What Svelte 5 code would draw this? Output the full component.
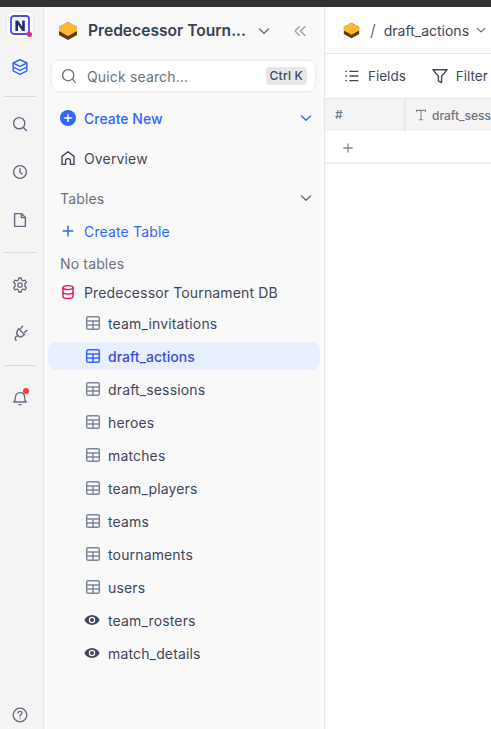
<script lang="ts">
    const tables = ['team_invitations', 'draft_actions', 'draft_sessions', 'heroes', 'matches', 'team_players', 'teams', 'tournaments', 'users'];
    const views = ['team_rosters', 'match_details'];
    const active = 'draft_actions';
</script>

{#snippet cube(size)}
    <svg width={size} height={size} viewBox="0 0 20 20">
        <path d="M10 1 L19 6 V14 L10 19 L1 14 V6 Z" fill="#5c3f08" />
        <path d="M10 1 L19 6 V10 L10 15 L1 10 V6 Z" fill="#fdb930" />
    </svg>
{/snippet}

<div class="topbar"></div>
<div class="page">
    <nav class="rail">
        <div class="logo">
            <svg width="20" height="20" viewBox="0 0 20 20" fill="none">
                <rect x="1" y="1" width="18" height="18" rx="3" stroke="#4a4ae0" stroke-width="1.8" />
                <path d="M5.4 16 V5.6 H8 L12.2 11.6 V5.6 H14.8 V16 H12.4 L8 9.8 V16 Z" fill="#1f2d78" />
            </svg>
            <span class="logo-dot"></span>
        </div>
        <div class="rail-icon first">
            <svg width="18" height="18" viewBox="0 0 18 18" fill="none" stroke="#3366ff" stroke-width="1.5" stroke-linejoin="round">
                <path d="M9 1.7 L16 5 L9 8.4 L2 5 Z" />
                <path d="M2.2 5.4 V12.8 L9 16.3 L15.8 12.8 V5.4" />
                <path d="M2.2 9.1 L9 12.4 L15.8 9.1" />
            </svg>
        </div>
        <div class="rail-sep top"></div>
        <div class="rail-icon">
            <svg width="16" height="16" viewBox="0 0 16 16" fill="none" stroke="#656b80" stroke-width="1.4" stroke-linecap="round">
                <circle cx="7.2" cy="7.2" r="5.6" /><path d="M11.4 11.4 L14.4 14.4" />
            </svg>
        </div>
        <div class="rail-icon">
            <svg width="16" height="16" viewBox="0 0 16 16" fill="none" stroke="#656b80" stroke-width="1.4" stroke-linecap="round">
                <circle cx="8" cy="8" r="6.4" /><path d="M8 4.6 V8.2 L10 10" />
            </svg>
        </div>
        <div class="rail-icon">
            <svg width="16" height="16" viewBox="0 0 16 16" fill="none" stroke="#656b80" stroke-width="1.4" stroke-linejoin="round">
                <path d="M2.6 1.6 H9.4 L13.4 5.6 V14.4 H2.6 Z" /><path d="M9.4 1.6 V5.6 H13.4" />
            </svg>
        </div>
        <div class="rail-sep"></div>
        <div class="rail-icon">
            <svg width="16" height="16" viewBox="0 0 16 16" fill="none" stroke="#656b80" stroke-width="1.3" stroke-linejoin="round">
                <circle cx="8" cy="8" r="2.2" />
                <path d="M6.8 1 H9.2 L9.6 3 L11.3 3.9 L13.2 3.2 L14.4 5.3 L12.9 6.6 V9.4 L14.4 10.7 L13.2 12.8 L11.3 12.1 L9.6 13 L9.2 15 H6.8 L6.4 13 L4.7 12.1 L2.8 12.8 L1.6 10.7 L3.1 9.4 V6.6 L1.6 5.3 L2.8 3.2 L4.7 3.9 L6.4 3 Z" />
            </svg>
        </div>
        <div class="rail-icon">
            <svg width="16" height="16" viewBox="0 0 16 16" fill="none" stroke="#656b80" stroke-width="1.4" stroke-linecap="round" stroke-linejoin="round">
                <path d="M6.6 3.6 L12.4 9.4 L10.6 11 C9.2 12.2 7.2 12 6 10.6 C4.6 9.4 4.4 7.4 5.4 6 Z" />
                <path d="M8.8 3.4 L10.6 1.2 M12.6 7.2 L14.8 5.4 M5.8 10.8 C3.4 11.4 2.4 13.2 4 15.2" />
            </svg>
        </div>
        <div class="rail-sep"></div>
        <div class="rail-icon bell">
            <svg width="16" height="16" viewBox="0 0 16 16" fill="none" stroke="#656b80" stroke-width="1.3" stroke-linecap="round" stroke-linejoin="round">
                <path d="M1.6 12 C3 11 3.4 9.6 3.4 7.4 C3.4 4.6 5.2 2.6 8 2.6 C10.8 2.6 12.6 4.6 12.6 7.4 C12.6 9.6 13 11 14.4 12 Z" />
                <path d="M6.8 14.6 H9.2" />
            </svg>
            <span class="bell-dot"></span>
        </div>
        <div class="rail-bottom">
            <svg width="16" height="16" viewBox="0 0 16 16" fill="none" stroke="#656b80" stroke-width="1.3" stroke-linecap="round">
                <circle cx="8" cy="8" r="6.8" />
                <path d="M6 6.2 C6 4.9 7 4.3 8 4.3 C9.1 4.3 10 5 10 6.1 C10 7.6 8 7.6 8 9.2" />
                <path d="M8 11.4 V11.5" />
            </svg>
        </div>
    </nav>

    <aside class="sidebar">
        <div class="project">
            {@render cube(20)}
            <span class="project-name">Predecessor Tourn...</span>
            <svg class="project-caret" width="12" height="12" viewBox="0 0 12 12" fill="none" stroke="#656b80" stroke-width="1.4" stroke-linecap="round" stroke-linejoin="round"><path d="M1.5 4 L6 8.2 L10.5 4" /></svg>
            <svg class="collapse" width="14" height="14" viewBox="0 0 14 14" fill="none" stroke="#9aa0b0" stroke-width="1.3" stroke-linecap="round" stroke-linejoin="round"><path d="M6.5 2.5 L2 7 L6.5 11.5 M12 2.5 L7.5 7 L12 11.5" /></svg>
        </div>

        <div class="search">
            <svg width="16" height="16" viewBox="0 0 16 16" fill="none" stroke="#656b80" stroke-width="1.3" stroke-linecap="round">
                <circle cx="7.2" cy="7.2" r="5.6" /><path d="M11.4 11.4 L14.4 14.4" />
            </svg>
            <span class="search-text">Quick search...</span>
            <span class="kbd">Ctrl K</span>
        </div>

        <div class="row create-new">
            <svg width="16" height="16" viewBox="0 0 16 16"><circle cx="8" cy="8" r="8" fill="#3366ff" /><path d="M8 4.2 V11.8 M4.2 8 H11.8" stroke="#fff" stroke-width="1.5" /></svg>
            <span>Create New</span>
            <svg class="end" width="12" height="12" viewBox="0 0 12 12" fill="none" stroke="#3366ff" stroke-width="1.4" stroke-linecap="round" stroke-linejoin="round"><path d="M1.5 4 L6 8.2 L10.5 4" /></svg>
        </div>

        <div class="row overview">
            <svg width="16" height="16" viewBox="0 0 16 16" fill="none" stroke="#414759" stroke-width="1.4" stroke-linejoin="round"><path d="M2 14.4 V6.4 L8 1.8 L14 6.4 V14.4 H10.4 V10.4 C10.4 8 5.6 8 5.6 10.4 V14.4 Z" /></svg>
            <span>Overview</span>
        </div>

        <div class="row tables-head">
            <span>Tables</span>
            <svg class="end" width="12" height="12" viewBox="0 0 12 12" fill="none" stroke="#656b80" stroke-width="1.4" stroke-linecap="round" stroke-linejoin="round"><path d="M1.5 4 L6 8.2 L10.5 4" /></svg>
        </div>

        <div class="row create-table">
            <svg width="16" height="16" viewBox="0 0 16 16" fill="none" stroke="#3366ff" stroke-width="1.5"><path d="M8 2.6 V13.4 M2.6 8 H13.4" /></svg>
            <span>Create Table</span>
        </div>

        <div class="no-tables">No tables</div>

        <div class="row base">
            <svg width="16" height="16" viewBox="0 0 16 16" fill="none" stroke="#e0115f" stroke-width="1.4">
                <ellipse cx="8" cy="3.6" rx="5" ry="2" />
                <path d="M3 3.6 V12.4 C3 13.5 5.2 14.4 8 14.4 C10.8 14.4 13 13.5 13 12.4 V3.6" />
                <path d="M3 8 C3 9.1 5.2 10 8 10 C10.8 10 13 9.1 13 8" />
            </svg>
            <span>Predecessor Tournament DB</span>
        </div>

        <ul class="tree">
            {#each tables as t}
                <li class="item" class:active={t === active}>
                    <svg width="16" height="16" viewBox="0 0 16 16" fill="none" stroke="currentColor" stroke-width="1.5">
                        <rect x="1.7" y="1.7" width="12.6" height="12.6" rx="1.6" />
                        <path d="M1.7 6 H14.3 M1.7 10 H14.3 M8 6 V14.3" />
                    </svg>
                    <span>{t}</span>
                </li>
            {/each}
            {#each views as v}
                <li class="item view">
                    <svg width="16" height="16" viewBox="0 0 16 16"><path fill-rule="evenodd" d="M8 3 C4.4 3 1.6 5.2 0.4 8 C1.6 10.8 4.4 13 8 13 C11.6 13 14.4 10.8 15.6 8 C14.4 5.2 11.6 3 8 3 Z M8 4.8 A3.2 3.2 0 1 1 8 11.2 A3.2 3.2 0 1 1 8 4.8 Z" fill="#414759" /><circle cx="8" cy="8" r="2" fill="#414759" /></svg>
                    <span>{v}</span>
                </li>
            {/each}
        </ul>
    </aside>

    <main class="main">
        <header class="crumb">
            {@render cube(17)}
            <span class="slash">/</span>
            <span class="crumb-name">draft_actions</span>
            <svg width="10" height="10" viewBox="0 0 12 12" fill="none" stroke="#656b80" stroke-width="1.4" stroke-linecap="round" stroke-linejoin="round"><path d="M1.5 4 L6 8.2 L10.5 4" /></svg>
        </header>
        <div class="toolbar">
            <div class="tool">
                <svg width="16" height="16" viewBox="0 0 16 16" stroke="#414759" stroke-width="1.4" fill="none"><path d="M5.4 3.4 H14.4 M5.4 8 H14.4 M5.4 12.6 H14.4 M1.4 3.4 H3 M1.4 8 H3 M1.4 12.6 H3" /></svg>
                <span>Fields</span>
            </div>
            <div class="tool filter">
                <svg width="16" height="16" viewBox="0 0 16 16" stroke="#414759" stroke-width="1.4" fill="none" stroke-linejoin="round"><path d="M1 1.8 H15 L9.6 8.4 V14.6 L6.4 12.8 V8.4 Z" /></svg>
                <span>Filter</span>
            </div>
        </div>
        <div class="grid-head">
            <div class="cell-num">#</div>
            <div class="cell-col">
                <svg width="12" height="12" viewBox="0 0 12 12" fill="none" stroke="#80869a" stroke-width="1.1" stroke-linecap="round"><path d="M1.5 2.6 V1.4 H10.5 V2.6 M6 1.4 V10.8 M4.4 10.8 H7.6" /></svg>
                <span>draft_sessions</span>
            </div>
        </div>
        <div class="grid-add">
            <svg width="12" height="12" viewBox="0 0 12 12" fill="none" stroke="#80869a" stroke-width="1.3"><path d="M6 1.4 V10.6 M1.4 6 H10.6" /></svg>
        </div>
    </main>
</div>

<style>
    :global(body) {
        margin: 0;
        overflow: hidden;
        background: #fff;
        font-family: Inter, "Noto Sans", sans-serif;
    }

    .topbar {
        height: 7px;
        background: #333334;
    }

    .page {
        display: flex;
        height: 722px;
    }

    .rail {
        width: 40px;
        padding-right: 3px;
        flex: none;
        display: flex;
        flex-direction: column;
        align-items: center;
        background: #f4f4f5;
        border-right: 1px solid #e7e7e9;
    }

    .logo {
        position: relative;
        width: 26px;
        height: 26px;
        box-sizing: border-box;
        padding-bottom: 1px;
        margin-top: 5px;
        display: flex;
        align-items: center;
        justify-content: center;
        background: #fafafb;
        border-radius: 5px;
        box-shadow: 0 0 0 1px #ececee;
    }

    .logo-dot {
        position: absolute;
        right: 1px;
        bottom: 1px;
        width: 5px;
        height: 5px;
        border-radius: 50%;
        background: #f0245f;
    }

    .rail-icon {
        position: relative;
        height: 16px;
        display: flex;
        align-items: center;
        justify-content: center;
        margin-bottom: 32px;
    }

    .rail-icon.first {
        margin-top: 20px;
        margin-bottom: 0;
        height: 18px;
    }

    .rail-sep {
        width: 32px;
        height: 1px;
        background: #d9d9dc;
        margin: 24px 0;
    }

    .rail-sep.top {
        margin: 20px 0 19px;
    }

    .rail-icon:has(+ .rail-sep) {
        margin-bottom: 0;
    }

    .bell-dot {
        position: absolute;
        top: -2px;
        right: -1px;
        width: 6px;
        height: 6px;
        border-radius: 50%;
        background: #ff3b30;
    }

    .rail-bottom {
        margin-top: auto;
        margin-bottom: 6px;
        height: 16px;
    }

    .sidebar {
        width: 281px;
        flex: none;
        box-sizing: border-box;
        padding: 0 4px;
        background: #f9f9fa;
        border-right: 1px solid #e7e7e9;
        color: #414759;
        font-size: 14px;
        letter-spacing: 0.15px;
    }

    .project {
        height: 47px;
        display: flex;
        align-items: center;
        padding: 0 13px 0 10px;
    }

    .project-name {
        margin-left: 10px;
        font-size: 15.6px;
        font-weight: 600;
        letter-spacing: 0;
        color: #374151;
        white-space: nowrap;
    }

    .project-caret {
        margin-left: 12px;
    }

    .collapse {
        margin-left: auto;
    }

    .search {
        height: 30px;
        margin: 7px 5px 0 4px;
        padding: 0 8px 0 9px;
        display: flex;
        align-items: center;
        background: #fff;
        border-radius: 8px;
        box-shadow: 0 0 3px rgba(0, 0, 0, 0.12);
    }

    .search-text {
        margin-left: 10px;
        color: #6b7280;
    }

    .kbd {
        margin-left: auto;
        padding: 0 4px;
        height: 18px;
        line-height: 18px;
        font-size: 12px;
        font-weight: 500;
        border-radius: 4px;
        background: #e7e7e9;
        letter-spacing: 0.2px;
    }

    .row {
        display: flex;
        align-items: center;
        gap: 8px;
        padding: 0 8px 0 12px;
        height: 28px;
    }

    .row .end {
        margin-left: auto;
    }

    .create-new {
        margin-top: 13px;
        color: #3366ff;
        font-weight: 500;
        letter-spacing: 0;
    }

    .overview {
        margin-top: 12px;
    }

    .tables-head {
        margin-top: 12px;
        color: #6b7280;
    }

    .create-table {
        margin-top: 5px;
        color: #3366ff;
    }

    .no-tables {
        margin-top: 7px;
        padding: 0 12px;
        height: 24px;
        line-height: 24px;
        color: #6b7280;
    }

    .base {
        margin-top: 2px;
    }

    .tree {
        list-style: none;
        margin: 3px 0 0;
        padding: 0;
        display: flex;
        flex-direction: column;
        gap: 5px;
    }

    .item {
        height: 28px;
        display: flex;
        align-items: center;
        gap: 7px;
        padding-left: 37px;
        border-radius: 8px;
        color: #80869a;
    }

    .item.view {
        padding-left: 36px;
        gap: 8px;
    }

    .item span {
        color: #414759;
    }

    .item.active {
        background: #e8effe;
        color: #3366ff;
    }

    .item.active span {
        color: #3a50d4;
        font-weight: 500;
        letter-spacing: 0;
    }

    .main {
        flex: 1;
        min-width: 0;
        overflow: hidden;
        color: #414759;
        font-size: 14px;
    }

    .crumb {
        height: 47px;
        box-sizing: border-box;
        display: flex;
        align-items: center;
        padding-left: 18px;
        border-bottom: 1px solid #e7e7e9;
    }

    .slash {
        margin: 0 8px 0 10px;
        font-size: 16px;
        color: #6b7280;
    }

    .crumb-name {
        margin-right: 7px;
        white-space: nowrap;
    }

    .toolbar {
        height: 44px;
        box-sizing: border-box;
        display: flex;
        align-items: center;
        padding-left: 19px;
        gap: 26px;
        font-size: 13.5px;
    }

    .tool {
        display: flex;
        align-items: center;
        gap: 8px;
    }

    .grid-head {
        height: 33px;
        display: flex;
        background: #f4f4f5;
        border-top: 1px solid #e7e7e9;
        box-sizing: border-box;
        font-size: 12px;
        font-weight: 500;
        color: #6b7280;
        white-space: nowrap;
    }

    .cell-num {
        width: 81px;
        flex: none;
        box-sizing: border-box;
        padding-left: 10px;
        line-height: 32px;
        border-right: 2px solid #e9e9eb;
    }

    .cell-col {
        display: flex;
        align-items: center;
        gap: 5px;
        padding-left: 9px;
    }

    .grid-add {
        height: 33px;
        box-sizing: border-box;
        display: flex;
        align-items: center;
        padding: 2px 0 0 17px;
        border-bottom: 2px solid #f1f1f3;
    }
</style>
